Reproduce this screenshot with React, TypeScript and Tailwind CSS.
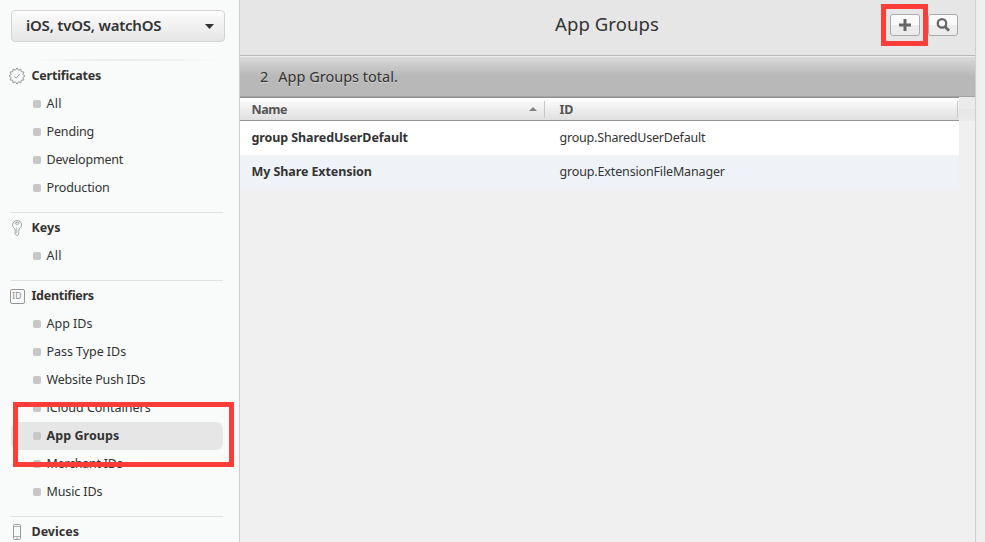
import type { ReactNode } from "react";

const CertificateIcon = () => {
  const points = Array.from({ length: 24 }, (_, i) => {
    const radius = i % 2 === 0 ? 8 : 6;
    const angle = (i * Math.PI) / 12 - Math.PI / 2;
    return `${(8 + radius * Math.cos(angle)).toFixed(2)},${(8 + radius * Math.sin(angle)).toFixed(2)}`;
  }).join(" ");
  return (
    <svg width="16" height="16" viewBox="0 0 16 16" fill="none" stroke="#8f8f8f" strokeWidth="0.9" className="overflow-visible">
      <polygon points={points} />
      <path d="M5.3 8.3 7.2 10.1 10.8 6" />
    </svg>
  );
};

const KeyIcon = () => (
  <svg width="16" height="16" viewBox="0 0 16 16" fill="none" stroke="#999" strokeWidth="0.9">
    <path d="M6.1 8.9C4.5 8.2 3.6 6.7 3.6 4.9 3.6 2.3 5.5.6 8.1.6s4.4 1.7 4.4 4.3c0 1.8-1 3.3-2.5 4v1.5l-.9.9 1 1-.9.9.8.9-1.7 1.6-2.1-1.6Z" />
    <ellipse cx="8.1" cy="3.3" rx="1.9" ry="1" />
    <path d="M7.7 7.2v5.9" strokeWidth="0.6" />
  </svg>
);

const IdIcon = () => (
  <span className="flex h-[15px] w-[15px] items-center justify-center rounded-[2px] border border-[#959595] text-[8.5px] leading-none font-normal tracking-[0.2px] text-[#888]">
    ID
  </span>
);

const DeviceIcon = () => (
  <svg width="16" height="16" viewBox="0 0 16 16" fill="none" stroke="#999" strokeWidth="1">
    <rect x="4.5" y="0.5" width="7" height="15" rx="1" />
    <path d="M4.5 2.5h7M4.5 12.5h7M7 14h2" strokeWidth="0.8" />
  </svg>
);

type Item = { label: string; tracking: string; active?: boolean };

type SectionProps = {
  title: string;
  icon: ReactNode;
  items: Item[];
  tracking: string;
  first?: boolean;
};

function NavSection({ title, icon, items, tracking, first = false }: SectionProps) {
  return (
    <section className={first ? "pb-[10px]" : "ml-[11px] w-[212px] border-t border-[#dfe1e0] pt-px pb-[10px]"}>
      <div className={first ? "ml-[11px] w-[212px]" : ""}>
        <h2 className={`-ml-[2px] flex h-7 items-center text-[12.5px] font-bold ${tracking}`}>
          <span className="mr-[6.5px] flex w-4 shrink-0 justify-center">{icon}</span>
          {title}
        </h2>
        <ul>
          {items.map((item) => (
            <li
              key={item.label}
              className={`flex h-7 items-center rounded-[7px] pl-[22px] text-[12.5px] whitespace-nowrap ${item.tracking} ${item.active ? "bg-[#e6e6e6] font-bold" : ""}`}
            >
              <span className="mr-[5.5px] h-2 w-2 shrink-0 rounded-[2px] bg-[#c7c7c7]" />
              {item.label}
            </li>
          ))}
        </ul>
      </div>
    </section>
  );
}

function Sidebar() {
  return (
    <aside className="h-full w-[240px] shrink-0 overflow-hidden border-r border-[#cdcfce] bg-[#f9fbfa] pt-[10px]">
      <button className="ml-[11px] flex h-8 w-[214px] items-center justify-between rounded-[4px] border border-[#d3d3d3] bg-linear-to-b from-[#fcfcfc] from-0% via-[#f1f1f1] via-50% to-[#e5e5e5] pr-[10px] pl-[14px] text-[15px] font-semibold tracking-[-0.22px]">
        <span className="-mt-px">iOS, tvOS, watchOS</span>
        <svg width="9" height="5" viewBox="0 0 9 5" fill="#333" className="mt-px">
          <path d="M0 0h9L4.5 5Z" />
        </svg>
      </button>
      <div className="mt-[17px] mb-px ml-[32px] h-[2px] w-[188px] bg-linear-to-r from-transparent via-[#e9eaea] to-transparent" />
      <NavSection
        first
        title="Certificates"
        tracking="tracking-[-0.2px]"
        icon={<CertificateIcon />}
        items={[
          { label: "All", tracking: "tracking-[0.3px]" },
          { label: "Pending", tracking: "tracking-[-0.15px]" },
          { label: "Development", tracking: "tracking-[-0.2px]" },
          { label: "Production", tracking: "tracking-[-0.13px]" },
        ]}
      />
      <NavSection
        title="Keys"
        tracking="tracking-[0px]"
        icon={<KeyIcon />}
        items={[{ label: "All", tracking: "tracking-[0.3px]" }]}
      />
      <NavSection
        title="Identifiers"
        tracking="tracking-[-0.28px]"
        icon={<IdIcon />}
        items={[
          { label: "App IDs", tracking: "tracking-[0px]" },
          { label: "Pass Type IDs", tracking: "tracking-[-0.05px]" },
          { label: "Website Push IDs", tracking: "tracking-[-0.18px]" },
          { label: "iCloud Containers", tracking: "tracking-[-0.02px]" },
          { label: "App Groups", tracking: "tracking-[0.05px]", active: true },
          { label: "Merchant IDs", tracking: "tracking-[-0.25px]" },
          { label: "Music IDs", tracking: "tracking-[-0.12px]" },
        ]}
      />
      <NavSection title="Devices" tracking="tracking-[0px]" icon={<DeviceIcon />} items={[]} />
    </aside>
  );
}

const toolButton =
  "flex h-[22px] w-[30px] items-center justify-center rounded-[3px] border border-[#aaa] bg-linear-to-b from-[#fafafa] from-50% to-[#ececec] to-50%";

export default function App() {
  return (
    <div className="relative flex h-[542px] w-[985px] overflow-hidden bg-[#f0f0f0] font-['Noto_Sans','Open_Sans',sans-serif] text-[#333]">
      <Sidebar />
      <main className="h-full w-[736px] shrink-0 border-r border-[#cfcfcf]">
        <header className="flex h-[56px] items-start border-b border-[#b8b8b8] bg-[#e6e6e6] pt-[14px]">
          <div className="w-[650px] pl-[315px]">
            <h1 className="-mt-[4px] text-[18.5px] leading-7 tracking-[0.1px] whitespace-nowrap">App Groups</h1>
          </div>
          <div className="flex gap-2">
            <button className={toolButton} aria-label="Add">
              <svg width="12" height="12" viewBox="0 0 12 12" stroke="#666" strokeWidth="3">
                <path d="M6 0v12M0 6h12" />
              </svg>
            </button>
            <button className={toolButton} aria-label="Search">
              <svg width="14" height="14" viewBox="0 0 14 14" fill="none" stroke="#666">
                <circle cx="6" cy="5.4" r="4.2" strokeWidth="2.3" />
                <path d="m9 8.7 4 4" strokeWidth="2.7" />
              </svg>
            </button>
          </div>
        </header>
        <div className="flex h-[41px] items-center gap-[10px] border-t border-b border-t-[#ededed] border-b-[#a3a3a3] bg-linear-to-b from-[#d9d9d9] from-0% via-[#b8b8b8] via-50% to-[#b8b8b8] pl-[20px] text-[14.5px] [text-shadow:0_1px_0_#d0d0d0]">
          <span>2</span>
          <span>App Groups total.</span>
        </div>
        <div className="flex">
          <div className="w-[719px] text-[12.5px]">
            <div className="flex h-6 items-center border-t border-b border-t-[#909090] border-b-[#969696] bg-linear-to-b from-white to-[#dfdfdf] font-bold text-[#555]">
              <div className="flex h-[17px] w-[305px] items-center justify-between border-r border-[#c7c7c7] pr-[7px] pl-[11.5px]">
                <span className="pt-[2px] tracking-[-0.45px]">Name</span>
                <svg width="8" height="4" viewBox="0 0 8 4" fill="#808080">
                  <path d="M4 0 8 4H0Z" />
                </svg>
              </div>
              <div className="flex h-[17px] w-[413px] items-center border-r border-[#c7c7c7] pl-[14.5px]">
                <span className="pt-[2px]">ID</span>
              </div>
            </div>
            <div className="flex h-[34px] items-center bg-white">
              <span className="w-[319.5px] pl-[11.5px] font-bold tracking-[-0.09px]">group SharedUserDefault</span>
              <span className="tracking-[-0.2px]">group.SharedUserDefault</span>
            </div>
            <div className="flex h-[34px] items-center bg-[#eff3f8]">
              <span className="w-[319.5px] pl-[11.5px] font-bold tracking-[-0.09px]">My Share Extension</span>
              <span className="tracking-[-0.15px]">group.ExtensionFileManager</span>
            </div>
          </div>
          <div className="h-6 w-4 bg-linear-to-b from-[#ebebeb] from-50% via-[#e6e6e6] via-50% to-[#ececec]" />
        </div>
      </main>
      <div className="h-full w-[2px] bg-[#eeeeee]" />
      <div className="absolute top-[4px] left-[881px] h-[42px] w-[47px] border-5 border-[#ff3d38]" />
      <div className="absolute top-[402px] left-[13px] h-[65px] w-[221px] border-5 border-[#ff3d38]" />
    </div>
  );
}
